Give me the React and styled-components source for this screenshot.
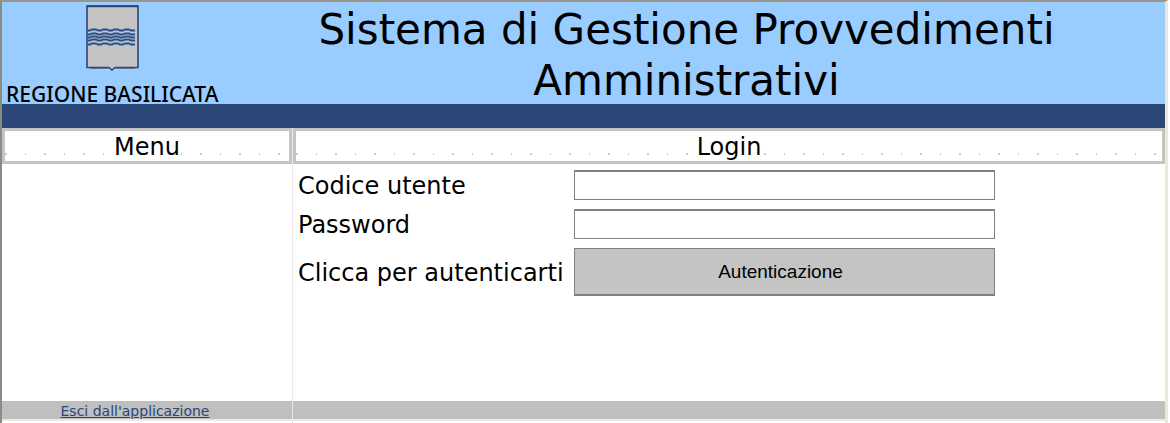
import React from "react";
import styled, { createGlobalStyle } from "styled-components";

const GlobalStyle = createGlobalStyle`
  * { box-sizing: border-box; }
  body {
    margin: 0;
    background: #fff;
    color: #000;
    font-family: Verdana, "DejaVu Sans", sans-serif;
  }
`;

const Page = styled.div`
  min-height: 100vh;
  display: flex;
  flex-direction: column;
  border-top: 2px solid #9c968a;
  border-left: 2px solid #8b8b80;
  margin-right: 2px;
  border-right: 3px solid #ece9d8;
`;

const Banner = styled.header`
  display: flex;
  background: #99ccff;
  border-bottom: 24px solid #2b4777;
`;

const Brand = styled.div`
  flex: none;
  width: 218px;
  height: 102px;
  padding: 3px 0 0 4px;
  display: flex;
  flex-direction: column;
  justify-content: space-between;
`;

const Crest = styled.svg`
  display: block;
  margin-left: 80px;
`;

const BrandName = styled.div`
  font: 500 21px/20px "Noto Sans", sans-serif;
  white-space: nowrap;
`;

const Title = styled.h1`
  flex: 1;
  margin: 0;
  padding: 2px 12px 0 0;
  font-size: 42px;
  line-height: 51px;
  font-weight: 400;
  text-align: center;
  margin-bottom: -2px;
`;

const Columns = styled.div`
  flex: 1;
  display: grid;
  grid-template-columns: 290px minmax(0, 1fr);
`;

const Column = styled.section`
  display: flex;
  flex-direction: column;
  border-left: ${(p) => (p.$divided ? "1px solid #ece9e4" : "0")};
`;

const ColumnTitle = styled.h2`
  margin: 0;
  height: 36px;
  border: 3px solid #c4c4c4;
  font-size: 24px;
  line-height: 32px;
  font-weight: 400;
  text-align: center;
  background:
    repeating-linear-gradient(90deg, #ccc 0 2px, transparent 2px 20px, #ccc 20px 21px, transparent 21px 39px) 0 22px / 100% 2px no-repeat,
    #fff;

  span {
    background: #fff;
  }
`;

const Content = styled.div`
  flex: 1;
`;

const LoginForm = styled.form`
  display: grid;
  grid-template-columns: 276px minmax(0, 421px);
  row-gap: 9px;
  padding: 6px 5px;
  align-items: center;
`;

const Label = styled.label`
  padding-top: 2px;
  font-size: 24px;
  line-height: 28px;
  white-space: nowrap;
`;

const Field = styled.input`
  width: 100%;
  height: 30px;
  padding: 0 6px;
  border: 1px solid #808080;
  border-top-width: 2px;
  border-radius: 0;
  background: #fff;
  font: 18px "Liberation Sans", sans-serif;
`;

const Submit = styled.button`
  width: 100%;
  height: 48px;
  padding: 0 8px 0 0;
  border: 1px solid #808080;
  border-bottom-width: 2px;
  border-radius: 0;
  background: #c4c4c4;
  color: #000;
  font: 19px "Liberation Sans", sans-serif;
`;

const FooterBar = styled.footer`
  height: 18px;
  margin-bottom: 4px;
  box-shadow: 0 2px #ece9e4;
  background: #bfbfbf;
  padding-right: 24px;
  text-align: center;
  font-size: 14px;
  line-height: 20px;

  a {
    color: #2b4777;
  }
`;

const WAVES = [25, 29, 32, 35, 39];

function RegionCrest() {
  return (
    <Crest width="53" height="66" viewBox="0 0 53 66" aria-hidden="true">
      <path d="M1 1H52V62.5H29L26 65L23 62.5H1Z" fill="#c4c4c4" stroke="#2b4777" strokeWidth="1.6" />
      <path d="M4 63.5H22M30 63.5H49" stroke="#5b7196" strokeWidth="1" />
      <path d="M1 1.2H52" stroke="#2b4777" strokeWidth="2" />
      <path d="M2 27.5H51M2 37H51" stroke="#a9c8ec" strokeWidth="3" strokeDasharray="6 4.5" />
      {WAVES.map((y) => (
        <path
          key={y}
          d={`M2 ${y + 0.5}h2l2 -1h4l2 1h3l2 -1h4l2 1h3l2 -1h4l2 1h3l2 -1h4l2 1h4`}
          fill="none"
          stroke="#2b4f86"
          strokeWidth="1.9"
        />
      ))}
    </Crest>
  );
}

export default function App() {
  return (
    <>
      <GlobalStyle />
      <Page>
        <Banner>
          <Brand>
            <RegionCrest />
            <BrandName>REGIONE BASILICATA</BrandName>
          </Brand>
          <Title>Sistema di Gestione Provvedimenti Amministrativi</Title>
        </Banner>
        <Columns>
          <Column>
            <ColumnTitle><span>Menu</span></ColumnTitle>
            <Content />
            <FooterBar>
              <a href="#esci">Esci dall'applicazione</a>
            </FooterBar>
          </Column>
          <Column $divided>
            <ColumnTitle><span>Login</span></ColumnTitle>
            <Content>
              <LoginForm onSubmit={(e) => e.preventDefault()}>
                <Label htmlFor="codice">Codice utente</Label>
                <Field id="codice" type="text" />
                <Label htmlFor="password">Password</Label>
                <Field id="password" type="password" />
                <Label htmlFor="autentica">Clicca per autenticarti</Label>
                <Submit id="autentica" type="submit">Autenticazione</Submit>
              </LoginForm>
            </Content>
            <FooterBar />
          </Column>
        </Columns>
      </Page>
    </>
  );
}
